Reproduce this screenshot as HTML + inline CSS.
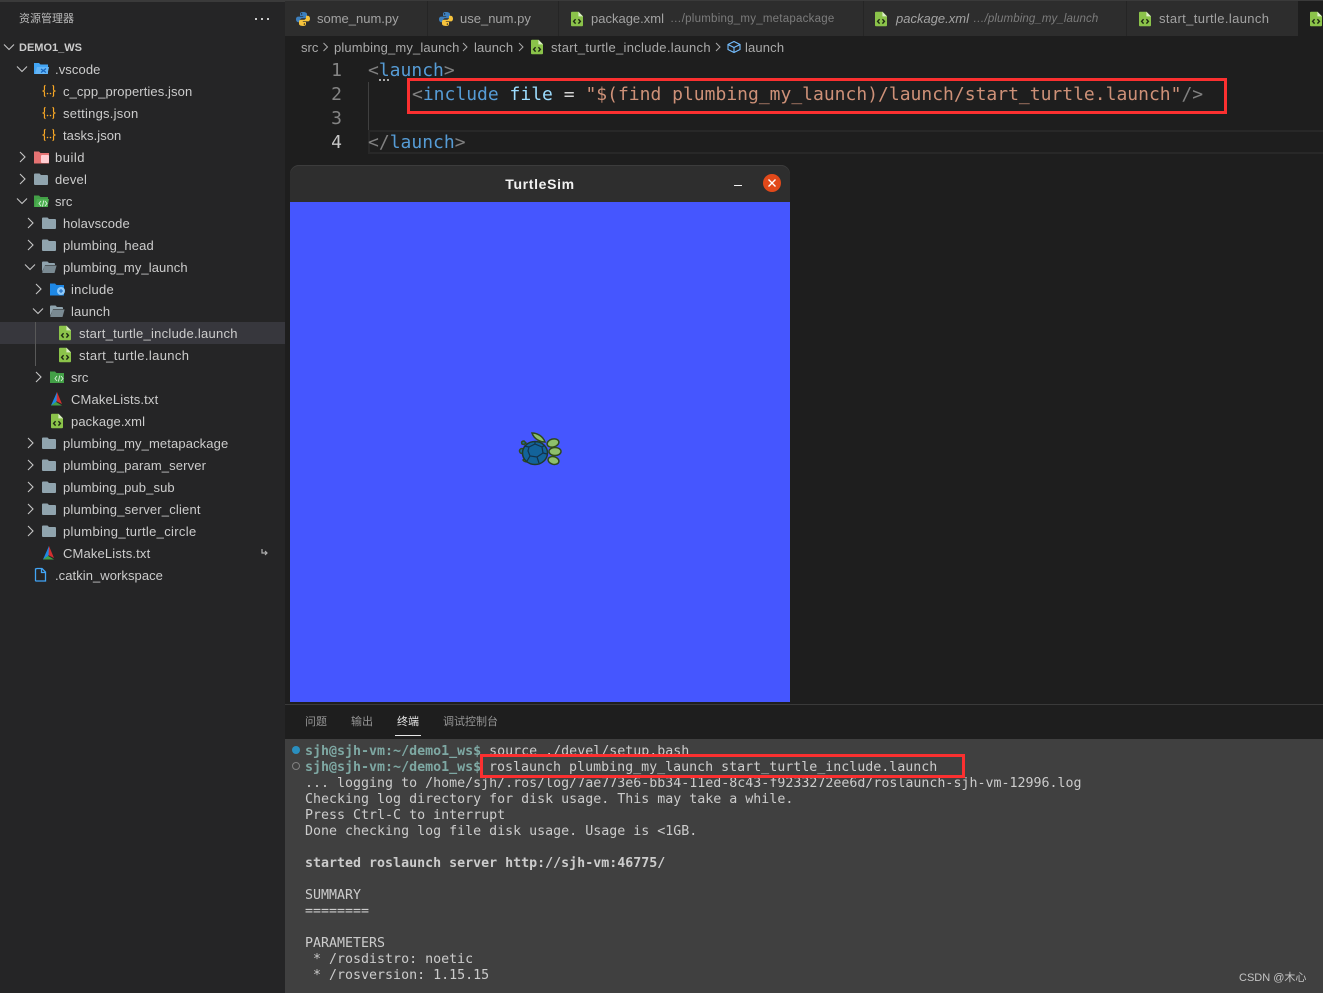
<!DOCTYPE html>
<html><head><meta charset="utf-8"><title>VS Code</title>
<style>
html,body{margin:0;padding:0;background:#1e1e1e}
#app{position:relative;width:1323px;height:993px;overflow:hidden;background:#1e1e1e;font-family:"Liberation Sans","Noto Sans CJK SC",sans-serif}
#app div{position:absolute;white-space:pre}
.r{height:22px;line-height:22px;font-size:13px;color:#cccccc;margin-top:1px}
.t{height:36px;line-height:36px;font-size:13px;color:#a3a3a3;margin-top:1px}
.b{height:22px;line-height:22px;font-size:13px;top:36px;color:#aaaaaa;margin-top:1px}
.n{font:18px/24px "DejaVu Sans Mono",monospace;color:#858585;width:30px;text-align:right;left:312px;margin-top:1px}
.c{font:18px/24px "DejaVu Sans Mono",monospace;color:#808080;margin-top:1px}
.tg{color:#569cd6}.at{color:#9cdcfe}.st{color:#ce9178}.eq{color:#d4d4d4}
.p{font-size:11px;height:34px;line-height:34px;top:705px;color:#969696}
.l{font:13.3px/16px "DejaVu Sans Mono",monospace;color:#cccccc;left:305px;margin-top:2px}
.pr{font-weight:bold;color:#7ea8a3}
svg{position:absolute;overflow:visible}
</style></head><body><div id="app">

<!-- sidebar -->
<div style="left:0;top:0;width:285px;height:993px;background:#252526"></div>
<div style="left:0;top:0;width:285px;height:2px;background:#3a3a3a"></div>
<div style="left:0;top:322px;width:285px;height:22px;background:#37373d"></div>
<div style="left:35px;top:322px;width:1px;height:44px;background:#585858"></div>
<div style="left:19px;top:8px;height:22px;line-height:22px;font-size:11px;color:#bbbbbb">资源管理器</div>
<div style="left:255px;top:18px;width:2px;height:2px;background:#ccc"></div>
<div style="left:261px;top:18px;width:2px;height:2px;background:#ccc"></div>
<div style="left:267px;top:18px;width:2px;height:2px;background:#ccc"></div>

<div class="r" style="left:19px;top:36px;font-size:11px;font-weight:bold">DEMO1_WS</div>
<div class="r" style="left:55px;top:58px;letter-spacing:.1px">.vscode</div>
<div class="r" style="left:63px;top:80px;letter-spacing:.1px">c_cpp_properties.json</div>
<div class="r" style="left:63px;top:102px;letter-spacing:.25px">settings.json</div>
<div class="r" style="left:63px;top:124px;letter-spacing:.05px">tasks.json</div>
<div class="r" style="left:55px;top:146px;letter-spacing:.5px">build</div>
<div class="r" style="left:55px;top:168px;letter-spacing:.2px">devel</div>
<div class="r" style="left:55px;top:190px">src</div>
<div class="r" style="left:63px;top:212px;letter-spacing:.1px">holavscode</div>
<div class="r" style="left:63px;top:234px;letter-spacing:.15px">plumbing_head</div>
<div class="r" style="left:63px;top:256px;letter-spacing:.1px">plumbing_my_launch</div>
<div class="r" style="left:71px;top:278px;letter-spacing:.25px">include</div>
<div class="r" style="left:71px;top:300px;letter-spacing:.15px">launch</div>
<div class="r" style="left:79px;top:322px;letter-spacing:.26px">start_turtle_include.launch</div>
<div class="r" style="left:79px;top:344px;letter-spacing:.37px">start_turtle.launch</div>
<div class="r" style="left:71px;top:366px">src</div>
<div class="r" style="left:71px;top:388px;letter-spacing:.15px">CMakeLists.txt</div>
<div class="r" style="left:71px;top:410px;letter-spacing:.1px">package.xml</div>
<div class="r" style="left:63px;top:432px;letter-spacing:.12px">plumbing_my_metapackage</div>
<div class="r" style="left:63px;top:454px;letter-spacing:.14px">plumbing_param_server</div>
<div class="r" style="left:63px;top:476px;letter-spacing:.12px">plumbing_pub_sub</div>
<div class="r" style="left:63px;top:498px;letter-spacing:.18px">plumbing_server_client</div>
<div class="r" style="left:63px;top:520px;letter-spacing:.32px">plumbing_turtle_circle</div>
<div class="r" style="left:63px;top:542px;letter-spacing:.15px">CMakeLists.txt</div>
<div class="r" style="left:55px;top:564px;letter-spacing:.06px">.catkin_workspace</div>

<svg width="1323" height="993" style="left:0;top:0;z-index:2;pointer-events:none" viewBox="0 0 1323 993">
<defs>
<symbol id="fc" viewBox="0 0 16 16"><path d="M1 3.5a1 1 0 0 1 1-1h4.5L8 4h6a1 1 0 0 1 1 1v8a1 1 0 0 1-1 1H2a1 1 0 0 1-1-1z" fill="#90a4ae"/></symbol>
<symbol id="fo" viewBox="0 0 16 16"><path d="M1 3.5a1 1 0 0 1 1-1h4.5L8 4h5a1 1 0 0 1 1 1v1H4L1 13z" fill="#90a4ae"/><path d="M3.6 6.5H15.6L13.5 14H1.2z" fill="#90a4ae" opacity=".8"/></symbol>
<symbol id="fg" viewBox="0 0 16 16"><path d="M3 .8h6.6L14 5.2v9a1 1 0 0 1-1 1H3a1 1 0 0 1-1-1V1.8a1 1 0 0 1 1-1z" fill="#8bc34a"/><path d="M9.4.8v4.6H14z" fill="#dcedc8"/><path d="M6.6 8.2 4.6 10.4l2 2.2M9.4 8.2l2 2.2-2 2.2" fill="none" stroke="#1f2a14" stroke-width="1.4"/></symbol>
<symbol id="py" viewBox="0 0 16 16"><path d="M8 1C5 1 5 2.2 5 3.2V5h3.2v.6H3.2C1.8 5.6 1 6.8 1 8.3s.8 2.9 2.2 2.9H5V9.4c0-1.2 1-2.1 2.2-2.1h2.9c1 0 1.9-.8 1.9-1.9V3.2C12 1.8 10.6 1 8 1z" fill="#3d7fbd"/><path d="M8 15c3 0 3-1.2 3-2.2V11H7.8v-.6h5c1.4 0 2.2-1.2 2.2-2.7s-.8-2.9-2.2-2.9H11v1.8c0 1.2-1 2.1-2.2 2.1H5.9C4.9 8.7 4 9.500 4 10.600v2.200C4 14.200 5.400 15 8 15z" fill="#f6c33c"/><circle cx="6.600" cy="2.900" r=".7" fill="#1e1e1e"/><circle cx="9.400" cy="13.100" r=".7" fill="#1e1e1e"/></symbol>
<symbol id="cm" viewBox="0 0 16 16"><path d="M8 1 5.500 9 8 10.500z" fill="#e53935"/><path d="M8 1l5 12-5-2.500z" fill="#d32f2f"/><path d="M5.200 9.500 2 14.500h11L8 11.500z" fill="#43a047"/><path d="M8 1 2 14.500l5.500-4z" fill="#1e88e5"/></symbol>
<symbol id="js" viewBox="0 0 16 16"><path d="M4.500 2.500C3 2.500 3.500 4 3.500 6S2.500 8 1.500 8c1 0 2 0 2 2s-.5 3.500 1 3.500M11.500 2.500c1.500 0 1 1.500 1 3.500s1 2 2 2c-1 0-2 0-2 2s.5 3.500-1 3.500" fill="none" stroke="#f9a825" stroke-width="1.200"/><circle cx="6.500" cy="10.500" r=".8" fill="#f9a825"/><circle cx="9.500" cy="10.500" r=".8" fill="#f9a825"/></symbol>
<polyline id="cr" points="0,-5 5,0 0,5" fill="none" stroke="#c5c5c5" stroke-width="1.100"/>
<polyline id="cd" points="-5,-2.500 0,2.500 5,-2.500" fill="none" stroke="#c5c5c5" stroke-width="1.100"/>
</defs>

<!-- chevrons -->
<use href="#cd" x="9" y="47"/><use href="#cd" x="22" y="69"/><use href="#cr" x="20" y="157"/><use href="#cr" x="20" y="179"/><use href="#cd" x="22" y="201"/>
<use href="#cr" x="28" y="223"/><use href="#cr" x="28" y="245"/><use href="#cd" x="30" y="267"/><use href="#cr" x="36" y="289"/><use href="#cd" x="38" y="311"/><use href="#cr" x="36" y="377"/>
<use href="#cr" x="28" y="443"/><use href="#cr" x="28" y="465"/><use href="#cr" x="28" y="487"/><use href="#cr" x="28" y="509"/><use href="#cr" x="28" y="531"/>

<!-- vscode folder -->
<path d="M34 63h5l1.500 1.500H48v9.500H34z" fill="#42a5f5"/><path d="M37 67h12l-1.500 7H35z" fill="#64b5f6"/><path d="M41 69l5 3.500M46 68.500l-5 4" stroke="#1565c0" stroke-width="1.300"/>
<use href="#js" x="41" y="83" width="16" height="16"/><use href="#js" x="41" y="105" width="16" height="16"/><use href="#js" x="41" y="127" width="16" height="16"/>
<!-- build -->
<path d="M34 151.500h5l1.500 1.500H49v10.500H34z" fill="#e57373"/><rect x="41" y="155" width="8" height="8" rx="1" fill="#ffcdd2"/>
<use href="#fc" x="33" y="171" width="16" height="16"/>
<!-- src open -->
<path d="M34 195.500h5l1.500 1.500H48v10H34z" fill="#43a047"/><path d="M37 199h12l-1.500 8H35z" fill="#4caf50"/><path d="M41 201l-2 2.500 2 2.500M45 201l2 2.500-2 2.500M43.800 200.500l-1.400 6" stroke="#d7f0d8" stroke-width=".9" fill="none"/>
<use href="#fc" x="41" y="215" width="16" height="16"/><use href="#fc" x="41" y="237" width="16" height="16"/><use href="#fo" x="41" y="259" width="16" height="16"/>
<!-- include -->
<path d="M50 283.500h5l1.500 1.500H64v10.500H50z" fill="#1e88e5"/><circle cx="61" cy="291" r="4" fill="#90caf9"/><path d="M59 291h4M61 289v4" stroke="#1565c0" stroke-width="1"/>
<use href="#fo" x="49" y="303" width="16" height="16"/>
<use href="#fg" x="57" y="325" width="16" height="16"/><use href="#fg" x="57" y="347" width="16" height="16"/>
<!-- src closed -->
<path d="M50 371.500h5l1.500 1.500H64v10H50z" fill="#43a047"/><path d="M57 376l-2 2.500 2 2.500M61 376l2 2.500-2 2.500M59.800 375.500l-1.400 6" stroke="#d7f0d8" stroke-width=".9" fill="none"/>
<use href="#cm" x="49" y="391" width="16" height="16"/><use href="#fg" x="49" y="413" width="16" height="16"/>
<use href="#fc" x="41" y="435" width="16" height="16"/><use href="#fc" x="41" y="457" width="16" height="16"/><use href="#fc" x="41" y="479" width="16" height="16"/><use href="#fc" x="41" y="501" width="16" height="16"/><use href="#fc" x="41" y="523" width="16" height="16"/>
<use href="#cm" x="41" y="545" width="16" height="16"/>
<path d="M262 549v4h5M265 551l2 2-2 2" fill="none" stroke="#b0b0b0" stroke-width="1.200"/>
<path d="M37 568.500h5l3.500 3.500v9h-9.500a1 1 0 0 1-.5-.5v-11.500z M41.500 568.500v4h4" fill="none" stroke="#42a5f5" stroke-width="1.300"/>

<!-- tabs icons -->
<use href="#py" x="295" y="11" width="16" height="16"/><use href="#py" x="438" y="11" width="16" height="16"/>
<use href="#fg" x="569" y="11" width="16" height="16"/><use href="#fg" x="873" y="11" width="16" height="16"/><use href="#fg" x="1137" y="11" width="16" height="16"/><use href="#fg" x="1308" y="11" width="16" height="16"/>
<!-- breadcrumb icons -->
<polyline points="323.500,43 327.500,47 323.500,51" fill="none" stroke="#aaa"/><polyline points="463,43 467,47 463,51" fill="none" stroke="#aaa"/><polyline points="519,43 523,47 519,51" fill="none" stroke="#aaa"/><polyline points="716,43 720,47 716,51" fill="none" stroke="#aaa"/>
<use href="#fg" x="529" y="39" width="16" height="16"/>
<path d="M734 41.500l6 3v5l-6 3-6-3v-5zM728 44.500l6 3 6-3M734 47.500v5" fill="none" stroke="#75beff" stroke-width="1.100"/>
</svg>

<!-- tabs -->
<div style="left:285px;top:0;width:1013px;height:36px;background:#2d2d2d"></div>
<div style="left:427px;top:0;width:1px;height:36px;background:#252525"></div>
<div style="left:558px;top:0;width:1px;height:36px;background:#252525"></div>
<div style="left:863px;top:0;width:1px;height:36px;background:#252525"></div>
<div style="left:1126px;top:0;width:1px;height:36px;background:#252525"></div>
<div style="left:285px;top:0;width:1038px;height:1px;background:#3a3a3a"></div>
<div class="t" style="left:317px;top:0">some_num.py</div>
<div class="t" style="left:460px;top:0">use_num.py</div>
<div class="t" style="left:591px;top:0">package.xml</div>
<div class="t" style="left:670px;top:0;font-size:11.500px;color:#7c7c7c;letter-spacing:.24px">…/plumbing_my_metapackage</div>
<div class="t" style="left:896px;top:0;font-style:italic">package.xml</div>
<div class="t" style="left:973px;top:0;font-size:11.500px;color:#7c7c7c;font-style:italic;letter-spacing:.1px">…/plumbing_my_launch</div>
<div class="t" style="left:1159px;top:0;letter-spacing:.37px">start_turtle.launch</div>

<!-- breadcrumb -->
<div class="b" style="left:301px">src</div>
<div class="b" style="left:334px;letter-spacing:.15px">plumbing_my_launch</div>
<div class="b" style="left:474px;letter-spacing:.15px">launch</div>
<div class="b" style="left:551px;letter-spacing:.3px">start_turtle_include.launch</div>
<div class="b" style="left:745px;letter-spacing:.15px">launch</div>

<!-- editor -->
<div style="left:368px;top:130px;width:955px;height:24px;box-sizing:border-box;border:2px solid #282828;border-right:0"></div>
<div style="left:368px;top:82px;width:1px;height:48px;background:#404040"></div>
<div class="n" style="top:58px">1</div><div class="n" style="top:82px">2</div><div class="n" style="top:106px">3</div><div class="n" style="top:130px;color:#c6c6c6">4</div>
<div class="c" style="left:368px;top:58px">&lt;<span class="tg">launch</span>&gt;</div>
<div class="c" style="left:368px;top:130px">&lt;/<span class="tg">launch</span>&gt;</div>
<div style="left:379px;top:79px;width:2px;height:2px;background:#aaa"></div><div style="left:383px;top:79px;width:2px;height:2px;background:#aaa"></div><div style="left:387px;top:79px;width:2px;height:2px;background:#aaa"></div>
<div style="left:407px;top:78px;width:820px;height:36px;box-sizing:border-box;border:3px solid #fb3030"></div>
<div class="c" style="left:412px;top:82px">&lt;<span class="tg">include</span> <span class="at">file</span> <span class="eq">=</span> <span class="st">"$(find plumbing_my_launch)/launch/start_turtle.launch"</span>/&gt;</div>

<!-- TurtleSim window -->
<div style="left:290px;top:165px;width:500px;height:37px;background:#2e2e2e;border-radius:9px 9px 0 0;box-shadow:0 1px 0 #3c3c3c inset"></div>
<div style="left:290px;top:202px;width:500px;height:500px;background:#4556ff"></div>
<div style="left:290px;top:173px;width:500px;height:22px;line-height:22px;text-align:center;font-size:14px;font-weight:bold;color:#f2f2f2;letter-spacing:.66px">TurtleSim</div>
<div style="left:734px;top:185px;width:8px;height:1px;background:#f2f2f2"></div>
<svg style="left:763px;top:174px" width="18" height="18"><circle cx="9" cy="9" r="9" fill="#e2491a"/><path d="M5.500 5.500l7 7M12.500 5.500l-7 7" stroke="#fff" stroke-width="1.400"/></svg>
<svg style="left:510px;top:425px" width="60" height="50" viewBox="0 0 60 50">
<g stroke="#2f4a1c" stroke-width="1.500" fill="#8ec06c">
<path d="M22 8c5 0 11 3 13 9-5 0-11-3-13-9z"/>
<path d="M13 35c2-2 6-3 8-1-1 3-6 4-8 1z"/>
<ellipse cx="43" cy="18" rx="6" ry="4" transform="rotate(-15 43 18)"/>
<ellipse cx="43.500" cy="35.500" rx="5.500" ry="3.800" transform="rotate(15 43.500 35.500)"/>
<ellipse cx="45" cy="26.500" rx="6" ry="4"/>
<path d="M14 16c-2 0-3 1-2 3 2 1 3 0 4-1z" fill="#1c6a9c"/>
<ellipse cx="12" cy="26" rx="2.500" ry="2.500" fill="#1c6a9c"/>
</g>
<ellipse cx="25" cy="28" rx="12.500" ry="11.500" fill="#13639a" stroke="#1f3a2c" stroke-width="1.500"/>
<path d="M19 22l6-3 7 3 1 6-6 4-7-1-2-5zM19 22l-5-1M25 19v-3M32 22l3-2M33 28l4 1M27 32l2 6M20 31l-3 5" fill="none" stroke="#12324a" stroke-width="1.200"/>
</svg>

<!-- panel -->
<div style="left:285px;top:704px;width:1038px;height:1px;background:#3a3a3a"></div>
<div class="p" style="left:305px">问题</div>
<div class="p" style="left:351px">输出</div>
<div class="p" style="left:397px;color:#e7e7e7">终端</div>
<div class="p" style="left:443px">调试控制台</div>
<div style="left:395px;top:735px;width:26px;height:1px;background:#e7e7e7"></div>

<!-- terminal -->
<div style="left:285px;top:739px;width:1038px;height:254px;background:#404040;overflow:hidden"></div>
<div style="left:292px;top:746px;width:8px;height:8px;border-radius:50%;background:#2a8fbf"></div>
<div style="left:292px;top:762px;width:8px;height:8px;box-sizing:border-box;border-radius:50%;border:1.500px solid #808080"></div>
<div class="l" style="top:742px"><span class="pr">sjh@sjh-vm:~/demo1_ws$</span> source ./devel/setup.bash</div>
<div class="l" style="top:758px"><span class="pr">sjh@sjh-vm:~/demo1_ws$</span></div>
<div class="l" style="top:774px">... logging to /home/sjh/.ros/log/7ae773e6-bb34-11ed-8c43-f9233272ee6d/roslaunch-sjh-vm-12996.log</div>
<div class="l" style="top:790px">Checking log directory for disk usage. This may take a while.</div>
<div class="l" style="top:806px">Press Ctrl-C to interrupt</div>
<div class="l" style="top:822px">Done checking log file disk usage. Usage is &lt;1GB.</div>
<div class="l" style="top:854px;font-weight:bold">started roslaunch server http://sjh-vm:46775/</div>
<div class="l" style="top:886px">SUMMARY</div>
<div class="l" style="top:902px">========</div>
<div class="l" style="top:934px">PARAMETERS</div>
<div class="l" style="top:950px"> * /rosdistro: noetic</div>
<div class="l" style="top:966px"> * /rosversion: 1.15.15</div>
<div style="left:480px;top:754px;width:485px;height:24px;box-sizing:border-box;border:3px solid #fb3030;background:#404040"></div>
<div class="l" style="left:489px;top:758px">roslaunch plumbing_my_launch start_turtle_include.launch</div>
<div style="left:1239px;top:970px;height:16px;line-height:16px;font-size:11px;color:#c4c4c4">CSDN @木心</div>
</div></body></html>
